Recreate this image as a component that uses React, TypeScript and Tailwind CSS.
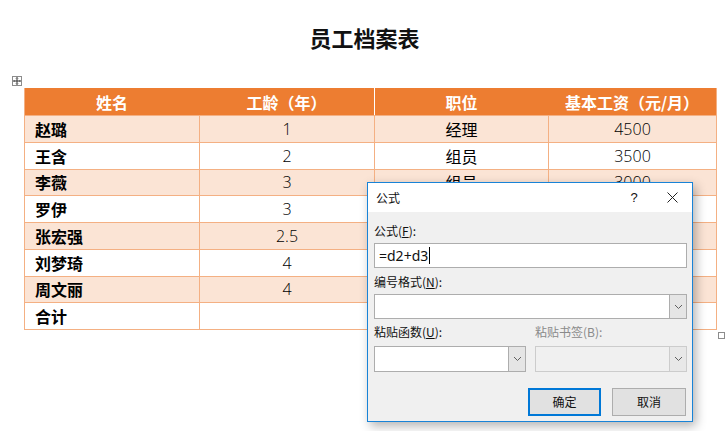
import React from "react";

const cjk = { fontFamily: '"Noto Sans CJK SC", "Noto Sans", sans-serif' };
const num = { fontFamily: '"Open Sans", "Noto Sans CJK SC", sans-serif' };

type Row = { name: string; years: string; pos: string; pay: string };
const rows: Row[] = [
  { name: "赵璐", years: "1", pos: "经理", pay: "4500" },
  { name: "王含", years: "2", pos: "组员", pay: "3500" },
  { name: "李薇", years: "3", pos: "组员", pay: "3000" },
  { name: "罗伊", years: "3", pos: "组员", pay: "3000" },
  { name: "张宏强", years: "2.5", pos: "组员", pay: "3200" },
  { name: "刘梦琦", years: "4", pos: "组员", pay: "3600" },
  { name: "周文丽", years: "4", pos: "组员", pay: "3600" },
  { name: "合计", years: "", pos: "", pay: "" },
];

function Chevron() {
  return (
    <svg width="9" height="6" viewBox="0 0 9 6">
      <path d="M1 1 L4.5 4.5 L8 1" fill="none" stroke="#606060" strokeWidth="1" />
    </svg>
  );
}

function Select({ disabled }: { disabled?: boolean }) {
  return (
    <div
      className={`flex h-full w-full border ${
        disabled ? "border-[#cccccc] bg-[#f0f0f0]" : "border-[#adadad] bg-white"
      }`}
    >
      <div className="flex-1" />
      <div
        className={`flex w-[17px] items-center justify-center border-l ${
          disabled ? "border-[#cccccc] bg-[#e8e8e8]" : "border-[#adadad] bg-[#e5e5e5]"
        }`}
      >
        <Chevron />
      </div>
    </div>
  );
}

export default function App() {
  return (
    <div className="relative h-[431px] w-[727px] overflow-hidden bg-white" style={cjk}>
      <div className="pt-[22px] text-center text-[22px] font-bold leading-[30px] text-[#111] pl-[2px]">
        员工档案表
      </div>

      <div className="relative ml-[24px] mt-[36px] w-[693px]">
        {/* move handle */}
        <div className="absolute left-[-12px] top-[-12px] flex h-[10px] w-[10px] items-center justify-center border border-[#8c8c8c] bg-white">
          <svg width="8" height="8" viewBox="0 0 8 8">
            <path d="M4 0.5 V7.5 M0.5 4 H7.5" stroke="#333" strokeWidth="1" />
            <path d="M3 1.5 L4 0.5 L5 1.5 M3 6.5 L4 7.5 L5 6.5 M1.5 3 L0.5 4 L1.5 5 M6.5 3 L7.5 4 L6.5 5" fill="none" stroke="#333" strokeWidth="0.8" />
          </svg>
        </div>

        <div className="border-x border-b border-[#f4b083]">
          <div className="flex h-[27px] items-center bg-[#ed7d31] text-[16px] font-bold text-white">
            <div className="w-[174px] text-center">姓名</div>
            <div className="w-[175px] text-center">工龄（年）</div>
            <div className="flex h-full w-[174px] items-center justify-center border-l border-white">职位</div>
            <div className="flex-1 text-center">基本工资（元/月）</div>
          </div>
          {rows.map((r, i) => (
            <div
              key={r.name}
              className={`flex h-[26.75px] border-t border-[#f4b083] text-[16px] leading-none text-black ${
                i % 2 === 0 && i < 7 ? "bg-[#fbe4d5]" : "bg-white"
              }`}
            >
              <div className="flex w-[174px] items-center pl-[10px] font-bold">{r.name}</div>
              <div className="flex w-[175px] items-center justify-center border-l border-[#f4b083] font-light" style={num}>
                {r.years}
              </div>
              <div className="flex w-[174px] items-center justify-center border-l border-[#f4b083]">{r.pos}</div>
              <div className="flex flex-1 items-center justify-center border-l border-[#f4b083] font-light" style={num}>
                {r.pay}
              </div>
            </div>
          ))}
        </div>
        <div className="absolute bottom-[-9px] right-[-8px] h-[7px] w-[7px] border border-[#8c8c8c] bg-white" />
      </div>

      {/* dialog */}
      <div className="absolute left-[367px] top-[182px] flex h-[240px] w-[326px] flex-col border border-[#1883d7] bg-[#f0f0f0] text-[12px] text-[#111] shadow-[3px_4px_10px_rgba(0,0,0,0.3)]">
        <div className="flex h-[29px] items-center bg-white pl-[8px]">
          <span className="flex-1">公式</span>
          <span className="w-[20px] text-center text-[13px]" style={{ fontFamily: '"Liberation Sans", sans-serif' }}>?</span>
          <span className="ml-[22px] mr-[14px] flex w-[12px] items-center justify-center">
            <svg width="11" height="11" viewBox="0 0 11 11">
              <path d="M0.5 0.5 L10.5 10.5 M10.5 0.5 L0.5 10.5" stroke="#222" strokeWidth="1" />
            </svg>
          </span>
        </div>
        <div className="flex flex-1 flex-col px-[6px] pr-[5px]">
          <div className="mt-[11px] leading-[16px]">
            公式(<span className="underline">F</span>):
          </div>
          <div className="mt-[4px] flex h-[25px] items-center border border-[#adadad] bg-white pl-[4px] text-[14px]" style={{ fontFamily: '"Noto Sans", sans-serif' }}>
            <span>=d2+d3</span>
            <span className="ml-[1px] h-[17px] w-px bg-black" />
          </div>
          <div className="mt-[6px] leading-[16px]">
            编号格式(<span className="underline">N</span>):
          </div>
          <div className="mt-[4px] h-[25px]">
            <Select />
          </div>
          <div className="mt-[5px] flex leading-[16px]">
            <div className="w-[161px]">
              粘贴函数(<span className="underline">U</span>):
            </div>
            <div className="text-[#8a8a8a]">粘贴书签(B):</div>
          </div>
          <div className="mt-[6px] flex h-[26px] gap-[9px]">
            <div className="w-[152px]">
              <Select />
            </div>
            <div className="flex-1">
              <Select disabled />
            </div>
          </div>
          <div className="mt-[16px] flex justify-end gap-[11px] pr-[1px]">
            <button className="h-[28px] w-[73px] border-2 border-[#0078d7] bg-[#e1e1e1] text-[12px]">确定</button>
            <button className="h-[28px] w-[74px] border border-[#adadad] bg-[#e1e1e1] text-[12px]">取消</button>
          </div>
        </div>
      </div>
    </div>
  );
}
